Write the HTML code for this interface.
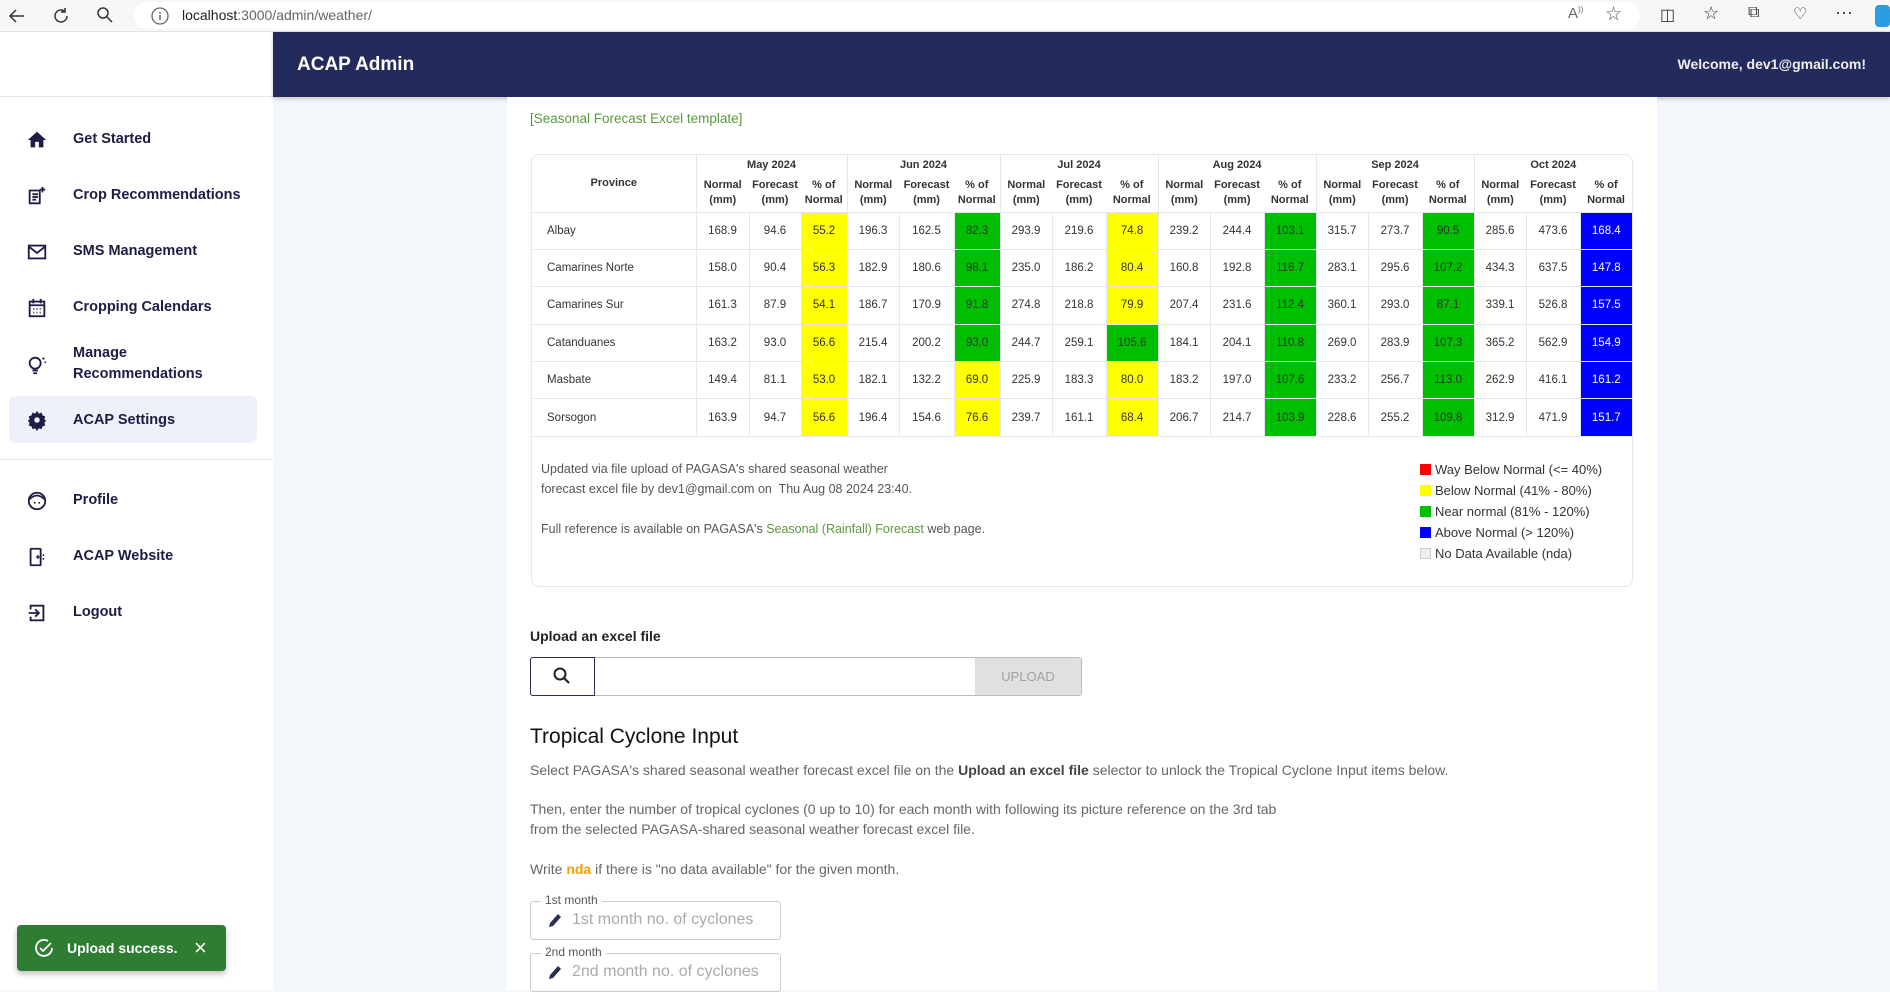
<!DOCTYPE html>
<html><head><meta charset="utf-8"><style>
*{box-sizing:border-box;margin:0;padding:0}
body{width:1890px;height:990px;overflow:hidden;background:#f4f7fb;font-family:"Liberation Sans",Arial,sans-serif;position:relative;color:#222}
.abs{position:absolute}
#bar{left:0;top:0;width:1890px;height:32px;background:#f7f7f7;border-bottom:1px solid #e2e2e2}
#pill{left:134px;top:2px;width:1506px;height:27px;background:#fff;border-radius:14px}
#side{left:0;top:32px;width:273px;height:958px;background:#fff}
#hdr{left:273px;top:32px;width:1617px;height:65px;background:#232b5c;box-shadow:0 2px 4px rgba(0,0,0,.2)}
.nav{position:absolute;left:73px;font-size:14.5px;font-weight:bold;color:#1c1c45;line-height:21px}
.ic{position:absolute;left:26px;width:22px;height:22px}
#panel{left:507px;top:97px;width:1150px;height:893px;background:#fff}
table{border-collapse:collapse;table-layout:fixed;font-size:11.5px;color:#333}
td,th{text-align:center;border-left:1px solid #e3e7ee;padding:0}
th{font-weight:bold;color:#333;font-size:11px;line-height:15px}
tbody td{height:37.4px;border-top:1px solid #e3e7ee}
tbody td.p{text-align:left;padding-left:15px;border-left:none}
.y{background:#ffff00}.g{background:#00bf00}.b{background:#0000ff;color:#fff}
.leg{font-size:13px;color:#333;line-height:21px}
.leg i{display:inline-block;width:11px;height:11px;margin-right:4px;vertical-align:-1px}
.sm{font-size:12.5px;color:#555;line-height:20px}
</style></head><body>
<div id="bar" class="abs">
<svg class="abs" style="left:6px;top:5px" width="22" height="22" viewBox="0 0 22 22"><path d="M18 11H5M10 5l-6 6 6 6" stroke="#333" stroke-width="1.5" fill="none"/></svg>
<svg class="abs" style="left:50px;top:5px" width="22" height="22" viewBox="0 0 22 22"><path d="M17 11a6 6 0 1 1-2-4.5M15 3v4h-4" stroke="#333" stroke-width="1.5" fill="none"/></svg>
<svg class="abs" style="left:95px;top:5px" width="20" height="20" viewBox="0 0 20 20"><circle cx="8" cy="8" r="5" stroke="#333" stroke-width="1.5" fill="none"/><path d="M12 12l5 5" stroke="#333" stroke-width="1.5"/></svg>
<div id="pill" class="abs"></div>
<svg class="abs" style="left:150px;top:6px" width="20" height="20" viewBox="0 0 20 20"><circle cx="10" cy="10" r="8" stroke="#666" stroke-width="1.3" fill="none"/><path d="M10 9v5M10 6v1.5" stroke="#666" stroke-width="1.5"/></svg>
<div class="abs" style="left:182px;top:7px;font-size:14px;color:#222">localhost<span style="color:#666">:3000/admin/weather/</span></div>
<div class="abs" style="left:1568px;top:5px;font-size:15px;color:#666">A<sup style="font-size:8px">))</sup></div>
<div class="abs" style="left:1605px;top:3px;font-size:19px;color:#555">☆</div>
<div class="abs" style="left:1660px;top:5px;font-size:16px;color:#333">◫</div>
<div class="abs" style="left:1703px;top:3px;font-size:18px;color:#333">☆</div>
<div class="abs" style="left:1748px;top:4px;font-size:16px;color:#333">⧉</div>
<div class="abs" style="left:1793px;top:4px;font-size:16px;color:#333">♡</div>
<div class="abs" style="left:1835px;top:2px;font-size:18px;color:#333">···</div>
<div class="abs" style="left:1875px;top:5px;width:15px;height:22px;background:#2a9ee0;border-radius:4px"></div>
</div>

<div id="side" class="abs">
<div class="abs" style="left:0;top:64px;width:273px;height:1px;background:#e3e3e3"></div>
<svg class="ic" style="top:97px" viewBox="0 0 24 24"><path d="M12 3L2 12h3v8h5v-6h4v6h5v-8h3z" fill="#1c1c45"/></svg>
<div class="nav" style="top:97px">Get Started</div>
<svg class="ic" style="top:153px" viewBox="0 0 24 24"><path d="M4 6h11v14H4z M7 10h6M7 13h6M7 16h4" stroke="#1c1c45" stroke-width="2" fill="none"/><path d="M18 2v6M15 5h6" stroke="#1c1c45" stroke-width="2"/></svg>
<div class="nav" style="top:153px">Crop Recommendations</div>
<svg class="ic" style="top:209px" viewBox="0 0 24 24"><rect x="3" y="5" width="18" height="14" stroke="#1c1c45" stroke-width="2" fill="none"/><path d="M3 6l9 7 9-7" stroke="#1c1c45" stroke-width="2" fill="none"/></svg>
<div class="nav" style="top:209px">SMS Management</div>
<svg class="ic" style="top:265px" viewBox="0 0 24 24"><rect x="4" y="5" width="16" height="16" stroke="#1c1c45" stroke-width="2" fill="none"/><path d="M4 9h16M8 2v5M16 2v5" stroke="#1c1c45" stroke-width="2"/><path d="M8 13h1M11.5 13h1M15 13h1M8 17h1M11.5 17h1M15 17h1" stroke="#1c1c45" stroke-width="2"/></svg>
<div class="nav" style="top:265px">Cropping Calendars</div>
<svg class="ic" style="top:322px" viewBox="0 0 24 24"><circle cx="10" cy="10" r="6" stroke="#1c1c45" stroke-width="2" fill="none"/><path d="M7 18h6M8 21h4" stroke="#1c1c45" stroke-width="2"/><circle cx="19" cy="5" r="1.2" fill="#1c1c45"/><circle cx="21" cy="9" r="1" fill="#1c1c45"/></svg>
<div class="nav" style="top:311px">Manage<br>Recommendations</div>
<div class="abs" style="left:9px;top:364px;width:248px;height:47px;background:#eef1f9;border-radius:6px"></div>
<svg class="ic" style="top:377px" viewBox="0 0 24 24"><path d="M12 2l2 3 3-1 1 3 3 1-1 3 2 2-2 2 1 3-3 1-1 3-3-1-2 3-2-3-3 1-1-3-3-1 1-3-2-2 2-2-1-3 3-1 1-3 3 1z" fill="#1c1c45"/><circle cx="12" cy="12" r="3" fill="#eef1f9"/></svg>
<div class="nav" style="top:378px">ACAP Settings</div>
<div class="abs" style="left:0;top:427px;width:273px;height:1px;background:#e3e3e3"></div>
<svg class="ic" style="top:458px" viewBox="0 0 24 24"><circle cx="12" cy="12" r="9" stroke="#1c1c45" stroke-width="2" fill="none"/><path d="M4 10q8-8 16 0" stroke="#1c1c45" stroke-width="2" fill="none"/><circle cx="9.5" cy="14" r="1" fill="#1c1c45"/><circle cx="14.5" cy="14" r="1" fill="#1c1c45"/></svg>
<div class="nav" style="top:458px">Profile</div>
<svg class="ic" style="top:514px" viewBox="0 0 24 24"><rect x="5" y="3" width="11" height="18" rx="1" stroke="#1c1c45" stroke-width="2" fill="none"/><path d="M11 12h4M13 10v4" stroke="#1c1c45" stroke-width="1.5"/><circle cx="19" cy="10" r="1" fill="#1c1c45"/><circle cx="19" cy="14" r="1" fill="#1c1c45"/></svg>
<div class="nav" style="top:514px">ACAP Website</div>
<svg class="ic" style="top:570px" viewBox="0 0 24 24"><path d="M5 8V4h14v16H5v-4" stroke="#1c1c45" stroke-width="2" fill="none"/><path d="M3 12h10M10 8l4 4-4 4" stroke="#1c1c45" stroke-width="2" fill="none"/></svg>
<div class="nav" style="top:570px">Logout</div>
</div>

<div id="hdr" class="abs">
<div class="abs" style="left:24px;top:22px;font-size:19px;font-weight:bold;color:#fff">ACAP Admin</div>
<div class="abs" style="right:24px;top:24px;font-size:14px;font-weight:bold;color:#eee">Welcome, dev1@gmail.com!</div>
</div>

<div id="panel" class="abs"></div>
<div class="abs" style="left:530px;top:111px;font-size:13.5px;color:#5a9a3a">[Seasonal Forecast Excel template]</div>

<div class="abs" style="left:531px;top:154px;width:1102px;height:433px;border:1px solid #e3e7ee;border-radius:8px;overflow:hidden;background:#fff">
<table style="width:1100px">
<colgroup><col style="width:164px"><col style="width:53px"><col style="width:52px"><col style="width:46px"><col style="width:52px"><col style="width:55px"><col style="width:46px"><col style="width:52px"><col style="width:54px"><col style="width:52px"><col style="width:52px"><col style="width:54px"><col style="width:52px"><col style="width:52px"><col style="width:54px"><col style="width:52px"><col style="width:52px"><col style="width:54px"><col style="width:52px"></colgroup>
<thead>
<tr style="height:20px"><th rowspan="2" style="border-left:none">Province</th><th colspan="3">May 2024</th><th colspan="3">Jun 2024</th><th colspan="3">Jul 2024</th><th colspan="3">Aug 2024</th><th colspan="3">Sep 2024</th><th colspan="3">Oct 2024</th></tr>
<tr style="height:37px"><th>Normal<br>(mm)</th><th style="border-left:none">Forecast<br>(mm)</th><th style="border-left:none">% of<br>Normal</th><th>Normal<br>(mm)</th><th style="border-left:none">Forecast<br>(mm)</th><th style="border-left:none">% of<br>Normal</th><th>Normal<br>(mm)</th><th style="border-left:none">Forecast<br>(mm)</th><th style="border-left:none">% of<br>Normal</th><th>Normal<br>(mm)</th><th style="border-left:none">Forecast<br>(mm)</th><th style="border-left:none">% of<br>Normal</th><th>Normal<br>(mm)</th><th style="border-left:none">Forecast<br>(mm)</th><th style="border-left:none">% of<br>Normal</th><th>Normal<br>(mm)</th><th style="border-left:none">Forecast<br>(mm)</th><th style="border-left:none">% of<br>Normal</th></tr>
</thead>
<tbody>
<tr><td class="p">Albay</td><td>168.9</td><td>94.6</td><td class="y">55.2</td><td>196.3</td><td>162.5</td><td class="g">82.3</td><td>293.9</td><td>219.6</td><td class="y">74.8</td><td>239.2</td><td>244.4</td><td class="g">103.1</td><td>315.7</td><td>273.7</td><td class="g">90.5</td><td>285.6</td><td>473.6</td><td class="b">168.4</td></tr>
<tr><td class="p">Camarines Norte</td><td>158.0</td><td>90.4</td><td class="y">56.3</td><td>182.9</td><td>180.6</td><td class="g">98.1</td><td>235.0</td><td>186.2</td><td class="y">80.4</td><td>160.8</td><td>192.8</td><td class="g">116.7</td><td>283.1</td><td>295.6</td><td class="g">107.2</td><td>434.3</td><td>637.5</td><td class="b">147.8</td></tr>
<tr><td class="p">Camarines Sur</td><td>161.3</td><td>87.9</td><td class="y">54.1</td><td>186.7</td><td>170.9</td><td class="g">91.8</td><td>274.8</td><td>218.8</td><td class="y">79.9</td><td>207.4</td><td>231.6</td><td class="g">112.4</td><td>360.1</td><td>293.0</td><td class="g">87.1</td><td>339.1</td><td>526.8</td><td class="b">157.5</td></tr>
<tr><td class="p">Catanduanes</td><td>163.2</td><td>93.0</td><td class="y">56.6</td><td>215.4</td><td>200.2</td><td class="g">93.0</td><td>244.7</td><td>259.1</td><td class="g">105.6</td><td>184.1</td><td>204.1</td><td class="g">110.8</td><td>269.0</td><td>283.9</td><td class="g">107.3</td><td>365.2</td><td>562.9</td><td class="b">154.9</td></tr>
<tr><td class="p">Masbate</td><td>149.4</td><td>81.1</td><td class="y">53.0</td><td>182.1</td><td>132.2</td><td class="y">69.0</td><td>225.9</td><td>183.3</td><td class="y">80.0</td><td>183.2</td><td>197.0</td><td class="g">107.6</td><td>233.2</td><td>256.7</td><td class="g">113.0</td><td>262.9</td><td>416.1</td><td class="b">161.2</td></tr>
<tr style="border-bottom:1px solid #e3e7ee"><td class="p">Sorsogon</td><td>163.9</td><td>94.7</td><td class="y">56.6</td><td>196.4</td><td>154.6</td><td class="y">76.6</td><td>239.7</td><td>161.1</td><td class="y">68.4</td><td>206.7</td><td>214.7</td><td class="g">103.9</td><td>228.6</td><td>255.2</td><td class="g">109.8</td><td>312.9</td><td>471.9</td><td class="b">151.7</td></tr>
</tbody></table>
<div class="abs sm" style="left:9px;top:304px">Updated via file upload of PAGASA's shared seasonal weather<br>forecast excel file by dev1@gmail.com on&nbsp; Thu Aug 08 2024 23:40.<br><br>Full reference is available on PAGASA's <span style="color:#5a9a3a">Seasonal (Rainfall) Forecast</span> web page.</div>
<div class="abs leg" style="left:888px;top:304px">
<div><i style="background:#f00"></i>Way Below Normal (&lt;= 40%)</div>
<div><i style="background:#ff0"></i>Below Normal (41% - 80%)</div>
<div><i style="background:#00bf00"></i>Near normal (81% - 120%)</div>
<div><i style="background:#00f"></i>Above Normal (&gt; 120%)</div>
<div><i style="background:#eee;border:1px solid #ccc"></i>No Data Available (nda)</div>
</div>
</div>

<div class="abs" style="left:530px;top:628px;font-size:14px;font-weight:bold;color:#222">Upload an excel file</div>
<div class="abs" style="left:530px;top:657px;width:552px;height:39px;border:1px solid #bbb;border-radius:3px;background:#fff"></div>
<div class="abs" style="left:530px;top:657px;width:65px;height:39px;border:1px solid #2a2f5a;border-radius:3px 0 0 3px"></div>
<svg class="abs" style="left:552px;top:666px" width="20" height="20" viewBox="0 0 20 20"><circle cx="8" cy="8" r="5.5" stroke="#222" stroke-width="2" fill="none"/><path d="M12 12l5 5" stroke="#222" stroke-width="2.2"/></svg>
<div class="abs" style="left:975px;top:658px;width:106px;height:37px;background:#e0e0e0;border-radius:0 3px 3px 0;color:#a0a0a0;font-size:13px;text-align:center;line-height:37px">UPLOAD</div>

<div class="abs" style="left:530px;top:725px;font-size:21px;color:#111">Tropical Cyclone Input</div>
<div class="abs" style="left:530px;top:760px;font-size:14px;color:#666;line-height:20px">Select PAGASA's shared seasonal weather forecast excel file on the <b style="color:#444">Upload an excel file</b> selector to unlock the Tropical Cyclone Input items below.</div>
<div class="abs" style="left:530px;top:799px;font-size:14px;color:#666;line-height:20px">Then, enter the number of tropical cyclones (0 up to 10) for each month with following its picture reference on the 3rd tab<br>from the selected PAGASA-shared seasonal weather forecast excel file.</div>
<div class="abs" style="left:530px;top:859px;font-size:14px;color:#666;line-height:20px">Write <b style="color:#f0a000">nda</b> if there is "no data available" for the given month.</div>

<div class="abs" style="left:530px;top:901px;width:251px;height:39px;border:1px solid #ccc;border-radius:3px"></div>
<div class="abs" style="left:541px;top:893px;padding:0 4px;background:#fff;font-size:12px;color:#555">1st month</div>
<svg class="abs" style="left:546px;top:911px" width="16" height="18" viewBox="0 0 16 18"><path d="M3 16l1-4 8-9 3 3-8 9z" fill="#2a2f5a"/></svg>
<div class="abs" style="left:572px;top:911px;font-size:16px;color:#aaa">1st month no. of cyclones</div>
<div class="abs" style="left:530px;top:953px;width:251px;height:39px;border:1px solid #ccc;border-radius:3px"></div>
<div class="abs" style="left:541px;top:945px;padding:0 4px;background:#fff;font-size:12px;color:#555">2nd month</div>
<svg class="abs" style="left:546px;top:963px" width="16" height="18" viewBox="0 0 16 18"><path d="M3 16l1-4 8-9 3 3-8 9z" fill="#2a2f5a"/></svg>
<div class="abs" style="left:572px;top:963px;font-size:16px;color:#aaa">2nd month no. of cyclones</div>

<div class="abs" style="left:17px;top:925px;width:209px;height:46px;background:#2e7d32;border-radius:4px;box-shadow:0 3px 6px rgba(0,0,0,.25)">
<svg class="abs" style="left:16px;top:12px" width="22" height="22" viewBox="0 0 22 22"><path d="M19 11a8 8 0 1 1-4-7" stroke="#fff" stroke-width="1.8" fill="none"/><path d="M7 11l3 3 8-8" stroke="#fff" stroke-width="1.8" fill="none"/></svg>
<div class="abs" style="left:50px;top:15px;font-size:14px;font-weight:bold;color:#fff">Upload success.</div>
<div class="abs" style="left:177px;top:10px;font-size:22px;color:#fff">×</div>
</div>
</body></html>
